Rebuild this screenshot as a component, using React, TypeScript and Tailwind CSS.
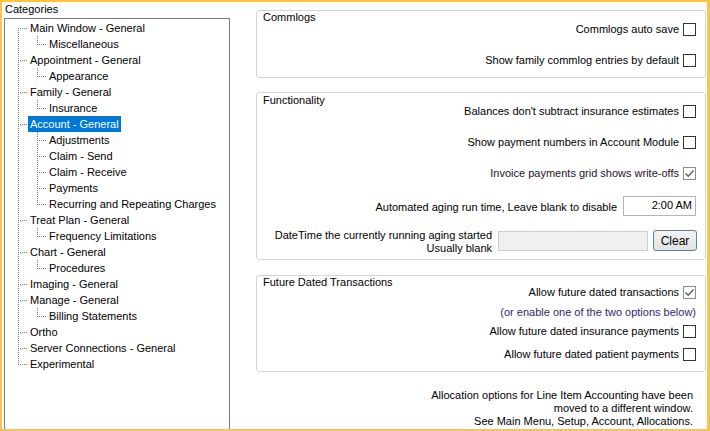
import React from "react";

type Node = [string, string[]];
const TREE: Node[] = [
  ["Main Window - General", ["Miscellaneous"]],
  ["Appointment - General", ["Appearance"]],
  ["Family - General", ["Insurance"]],
  ["Account - General", ["Adjustments", "Claim - Send", "Claim - Receive", "Payments", "Recurring and Repeating Charges"]],
  ["Treat Plan - General", ["Frequency Limitations"]],
  ["Chart - General", ["Procedures"]],
  ["Imaging - General", []],
  ["Manage - General", ["Billing Statements"]],
  ["Ortho", []],
  ["Server Connections - General", []],
  ["Experimental", []],
];

type Row = { label: string; level: number; selected?: boolean };

function buildRows() {
  const rows: Row[] = [];
  const lines: React.ReactNode[] = [];
  let lastRoot = 0;
  TREE.forEach(([root, kids]) => {
    const p = rows.length;
    lastRoot = p;
    rows.push({ label: root, level: 0, selected: root === "Account - General" });
    lines.push(<line key={"h" + p} x1={13} x2={23} y1={9.5 + 16 * p} y2={9.5 + 16 * p} />);
    let lastKid = -1;
    kids.forEach((k) => {
      const c = rows.length;
      lastKid = c;
      rows.push({ label: k, level: 1 });
      lines.push(<line key={"h" + c} x1={32} x2={42} y1={9.5 + 16 * c} y2={9.5 + 16 * c} />);
    });
    if (lastKid >= 0) {
      lines.push(<line key={"v" + p} x1={32.5} x2={32.5} y1={17 + 16 * p} y2={10 + 16 * lastKid} />);
    }
  });
  lines.push(<line key="vroot" x1={13.5} x2={13.5} y1={9} y2={10 + 16 * lastRoot} />);
  return { rows, lines };
}

function Check({ checked }: { checked?: boolean }) {
  if (checked) {
    return (
      <span className="w-[13px] h-[13px] border border-[#8c8c8c] bg-white flex items-center justify-center shrink-0">
        <svg width="11" height="11" viewBox="0 0 11 11">
          <path d="M1.5 5.5 L4.2 8.2 L9.5 2.5" stroke="#5c5c5c" strokeWidth="1.4" fill="none" />
        </svg>
      </span>
    );
  }
  return <span className="w-[13px] h-[13px] border border-[#333333] bg-white shrink-0" />;
}

function CheckRow({ label, checked, className = "", color = "" }: { label: string; checked?: boolean; className?: string; color?: string }) {
  return (
    <div className={"flex items-center justify-end h-[13px] gap-[4px] " + className}>
      <span className={"whitespace-nowrap leading-[13px] " + color}>{label}</span>
      <Check checked={checked} />
    </div>
  );
}

export default function App() {
  const { rows, lines } = buildRows();
  return (
    <div className="w-[710px] h-[431px] bg-white border-t-2 border-l-2 border-b-2 border-r-[3px] border-[#ffc34d] flex font-['Liberation_Sans',Arial,sans-serif] text-[11px] text-black overflow-hidden">
      {/* Left column */}
      <div className="w-[228px] flex flex-col pl-[2px] shrink-0">
        <div className="h-[16px] leading-[14px] pl-px">Categories</div>
        <div className="relative flex-1 w-[226px] border border-b-0 border-[#7a7a7a] pt-px">
          <svg className="absolute left-0 top-0 pointer-events-none" width="224" height="420" stroke="#7a7a7a" strokeWidth="1" strokeDasharray="1 1" fill="none">
            {lines}
          </svg>
          {rows.map((r, i) => (
            <div key={i} className="relative h-[16px] flex">
              <span
                className={
                  "h-[16px] leading-[16px] px-[2px] whitespace-nowrap " +
                  (r.level === 0 ? "ml-[23px] " : "ml-[42px] ") +
                  (r.selected ? "bg-[#0078d7] text-white" : "")
                }
              >
                {r.label}
              </span>
            </div>
          ))}
        </div>
      </div>

      {/* Right column */}
      <div className="flex-1 flex flex-col pl-[26px] pt-[8px]">
        {/* Commlogs */}
        <div className="w-[450px] h-[68px] border border-[#d5d5d5] rounded-[3px] pr-[9px] flex flex-col">
          <div className="h-[12px] leading-[13px] pl-[6px]">Commlogs</div>
          <CheckRow label="Commlogs auto save" />
          <CheckRow label="Show family commlog entries by default" className="mt-[18px]" />
        </div>

        {/* Functionality */}
        <div className="mt-[14px] w-[450px] h-[168px] border border-[#d5d5d5] rounded-[3px] pr-[9px] flex flex-col">
          <div className="h-[12px] leading-[14px] pl-[6px]">Functionality</div>
          <CheckRow label="Balances don't subtract insurance estimates" />
          <CheckRow label="Show payment numbers in Account Module" className="mt-[18px]" />
          <CheckRow label="Invoice payments grid shows write-offs" checked className="mt-[18px]" color="text-[#24102e]" />
          <div className="mt-[16px] flex items-start justify-end gap-[6px]">
            <span className="mt-[5px] leading-[13px] whitespace-nowrap">Automated aging run time, Leave blank to disable</span>
            <div className="w-[73px] h-[20px] border border-[#b4b4b4] bg-white text-right pr-[3px] leading-[17px]">2:00 AM</div>
          </div>
          <div className="mt-[14px] flex items-start justify-end">
            <div className="mt-[-1px] text-right leading-[13px] whitespace-nowrap mr-[6px]">
              <div>DateTime the currently running aging started</div>
              <div>Usually blank</div>
            </div>
            <div className="mt-px w-[150px] h-[20px] border border-[#cccccc] bg-[#f0f0f0] mr-[5px]" />
            <div className="w-[44px] h-[21px] mr-[-1px] border border-[#5f7f9f] rounded-[3px] bg-gradient-to-b from-[#f4f4f4] to-[#e2e2e2] flex items-center justify-center text-[12px] leading-[14px]">
              Clear
            </div>
          </div>
        </div>

        {/* Future Dated Transactions */}
        <div className="mt-[15px] w-[450px] h-[97px] border border-[#d5d5d5] rounded-[3px] pr-[9px] flex flex-col">
          <div className="h-[10px] leading-[12px] pl-[6px]">Future Dated Transactions</div>
          <CheckRow label="Allow future dated transactions" checked />
          <div className="mt-[7px] h-[13px] leading-[13px] text-right whitespace-nowrap text-[#2e2a6a]">(or enable one of the two options below)</div>
          <CheckRow label="Allow future dated insurance payments" className="mt-[6px]" />
          <CheckRow label="Allow future dated patient payments" className="mt-[10px]" />
        </div>

        <div className="mt-[17px] w-[450px] pr-[13px] text-right leading-[13px]">
          <div>Allocation options for Line Item Accounting have been</div>
          <div>moved to a different window.</div>
          <div>See Main Menu, Setup, Account, Allocations.</div>
        </div>
      </div>
    </div>
  );
}
